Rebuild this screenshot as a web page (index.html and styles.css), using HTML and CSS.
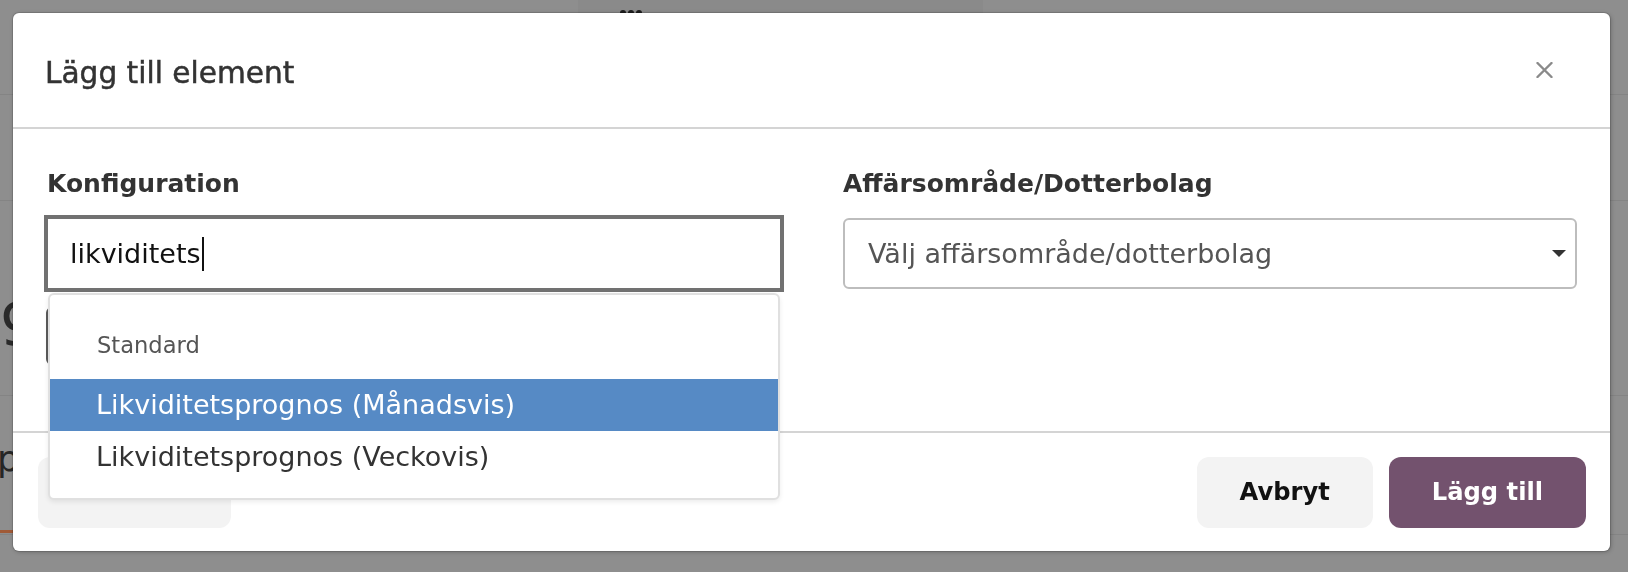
FILE: index.html
```html
<!DOCTYPE html>
<html lang="sv">
<head>
<meta charset="utf-8">
<title>Lägg till element</title>
<link rel="stylesheet" href="styles.css">
</head>
<body>
<div class="page">
  <div class="page-row page-row--top">
    <div class="page-tab"><span class="page-dot"></span><span class="page-dot"></span><span class="page-dot"></span></div>
  </div>
  <div class="page-row page-row--two"></div>
  <div class="page-row page-row--three"><span class="page-big">9</span></div>
  <div class="page-row page-row--four"><span class="page-p">p</span><div class="page-bar"></div></div>
</div>

<div class="modal" role="dialog" aria-labelledby="modal-title">
  <header class="modal-header">
    <h2 class="modal-title" id="modal-title">Lägg till element</h2>
    <button class="modal-close" type="button" aria-label="Stäng">
      <svg width="17" height="16" viewBox="0 0 17 16" aria-hidden="true"><path d="M1.5 1L15.5 15M15.5 1L1.5 15" stroke="#8a8a8a" stroke-width="2.4" stroke-linecap="round" fill="none"/></svg>
    </button>
  </header>

  <div class="modal-body">
    <div class="field">
      <label class="field-label">Konfiguration</label>
      <div class="combo">
        <div class="combo-input"><span class="combo-value">likviditets</span><span class="combo-caret"></span></div>
        <ul class="combo-menu">
          <li class="combo-group">Standard</li>
          <li class="combo-option is-active">Likviditetsprognos (Månadsvis)</li>
          <li class="combo-option">Likviditetsprognos (Veckovis)</li>
        </ul>
      </div>
      <div class="field-extra"></div>
    </div>
    <div class="field">
      <label class="field-label">Affärsområde/Dotterbolag</label>
      <div class="select">
        <span class="select-placeholder">Välj affärsområde/dotterbolag</span>
        <span class="select-arrow"></span>
      </div>
    </div>
  </div>

  <footer class="modal-footer">
    <button class="btn btn--light" type="button">Tillbaka</button>
    <div class="footer-actions">
      <button class="btn btn--light" type="button">Avbryt</button>
      <button class="btn btn--primary" type="button">Lägg till</button>
    </div>
  </footer>
</div>
</body>
</html>
```

FILE: styles.css
```css
* { box-sizing: border-box; }

html, body {
  margin: 0;
  padding: 0;
}

body {
  width: 1628px;
  height: 572px;
  overflow: hidden;
  background: #8e8e8e;
  font-family: "DejaVu Sans", "Liberation Sans", sans-serif;
  color: #333;
}

/* ---------- dimmed page behind the dialog ---------- */
.page {
  display: flex;
  flex-direction: column;
}

.page-row {
  border-bottom: 1px solid #848484;
}

.page-row--top {
  height: 95px;
}

.page-tab {
  margin-left: 578px;
  width: 405px;
  height: 94px;
  background: #8a8a8a;
  display: flex;
  gap: 2px;
  padding: 10px 0 0 42px;
}

.page-dot {
  width: 6px;
  height: 6px;
  border-radius: 50%;
  background: #1e1e1e;
}

.page-row--two {
  height: 106px;
}

.page-row--three {
  height: 195px;
  padding-top: 95px;
}

.page-big {
  display: block;
  font-size: 58px;
  line-height: 58px;
  color: #2a2a2a;
}

.page-row--four {
  height: 139px;
  padding-top: 45px;
}

.page-p {
  display: block;
  margin-left: -3px;
  font-size: 36px;
  line-height: 36px;
  color: #262626;
}

.page-bar {
  margin-top: 53px;
  width: 120px;
  height: 3px;
  background: #a05a37;
}

/* ---------- dialog ---------- */
.modal {
  position: fixed;
  left: 13px;
  top: 13px;
  width: 1597px;
  height: 538px;
  background: #fff;
  border-radius: 6px;
  box-shadow: 0 0 0 1px rgba(0, 0, 0, 0.12), 1px 1px 4px rgba(0, 0, 0, 0.25);
  display: flex;
  flex-direction: column;
}

.modal-header {
  height: 116px;
  flex: none;
  border-bottom: 2px solid #d4d4d4;
  display: flex;
  align-items: center;
  justify-content: space-between;
  padding: 0 57px 0 32px;
}

.modal-title {
  margin: 0;
  padding-top: 6px;
  font-size: 29.6px;
  font-weight: normal;
  line-height: 36px;
  color: #333;
  -webkit-text-stroke: 0.5px #333;
}

.modal-close {
  border: 0;
  background: none;
  padding: 0;
  width: 17px;
  height: 16px;
  display: flex;
}

.modal-body {
  flex: 1;
  display: grid;
  grid-template-columns: 734px 734px;
  column-gap: 62px;
  padding: 40px 33px 0 34px;
  align-items: start;
}

.field {
  display: flex;
  flex-direction: column;
}

.field-label {
  font-size: 25px;
  font-weight: bold;
  line-height: 30px;
  color: #333;
  margin-bottom: 19px;
}

.combo {
  position: relative;
}

.combo-input {
  height: 71px;
  border: 1px solid #717171;
  outline: 3px solid #717171;
  display: flex;
  align-items: center;
  padding-left: 22px;
  background: #fff;
}

.combo-value {
  font-size: 27px;
  color: #111;
}

.combo-caret {
  width: 2px;
  height: 34px;
  margin-left: 1px;
  background: #111;
}

.combo-menu {
  position: absolute;
  z-index: 5;
  top: calc(100% + 4px);
  left: 1px;
  right: 1px;
  margin: 0;
  padding: 0 0 15px;
  list-style: none;
  background: #fff;
  border: 2px solid #e0e0e0;
  border-radius: 6px;
  box-shadow: 0 2px 5px rgba(0, 0, 0, 0.08);
}

.combo-group {
  padding: 36px 0 20px 47px;
  font-size: 22.6px;
  line-height: 28px;
  color: #555;
}

.combo-option {
  height: 52px;
  line-height: 52px;
  padding-left: 46px;
  font-size: 27px;
  color: #333;
}

.combo-option.is-active {
  background: #568ac5;
  color: #fff;
}

.field-extra {
  margin-top: 18px;
  margin-left: -1px;
  width: 420px;
  height: 58px;
  border: 2px solid #5a5a5a;
  border-radius: 6px;
}

.select {
  height: 71px;
  border: 2px solid #bdbdbd;
  border-radius: 6px;
  display: flex;
  align-items: center;
  justify-content: space-between;
  padding: 0 9px 0 23px;
}

.select-placeholder {
  font-size: 27px;
  color: #555;
}

.select-arrow {
  width: 0;
  height: 0;
  border-left: 7.5px solid transparent;
  border-right: 7.5px solid transparent;
  border-top: 7.5px solid #333;
}

.modal-footer {
  flex: none;
  height: 120px;
  border-top: 2px solid #d4d4d4;
  display: flex;
  align-items: center;
  justify-content: space-between;
  padding: 0 24px 0 25px;
}

.footer-actions {
  display: flex;
  gap: 16px;
}

.btn {
  height: 71px;
  border: 0;
  border-radius: 12px;
  padding: 0 43px;
  font-family: "DejaVu Sans", "Liberation Sans", sans-serif;
  font-size: 24.2px;
  font-weight: bold;
}

.btn--light {
  background: #f3f3f3;
  color: #111;
}

.btn--primary {
  background: #73526e;
  color: #fff;
}
```
